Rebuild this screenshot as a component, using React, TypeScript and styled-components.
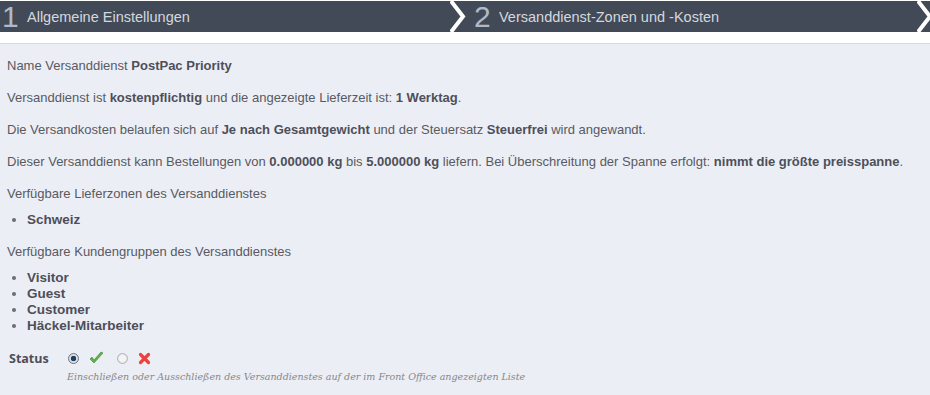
import React from 'react';
import styled, { createGlobalStyle } from 'styled-components';

const GlobalStyle = createGlobalStyle`
  html, body {
    margin: 0;
    padding: 0;
    background: #ffffff;
  }
  body {
    font-family: Arial, "Liberation Sans", sans-serif;
    font-size: 13px;
    color: #585a62;
  }
`;

const Page = styled.div`
  width: 930px;
  height: 395px;
  overflow: hidden;
  display: flex;
  flex-direction: column;
`;

const Steps = styled.div`
  display: flex;
  height: 31px;
  margin-top: 1px;
`;

const Step = styled.div`
  flex: ${p => (p.$last ? '0 0 451px' : '0 0 450px')};
  display: flex;
  align-items: center;
  background: #434a57;
`;

const StepNumber = styled.span`
  font-size: 30px;
  line-height: 30px;
  height: 30px;
  color: #aebacb;
  padding-left: ${p => (p.$first ? '2px' : '8px')};
  width: ${p => (p.$first ? '25px' : '24px')};
`;

const StepLabel = styled.span`
  font-size: 14.5px;
  color: #d3d8df;
  margin-left: ${p => (p.$first ? '0' : '1px')};
`;

const Separator = styled.svg`
  display: block;
  flex: 0 0 auto;
  background: #434a57;
`;

const Spacer = styled.div`
  height: 11px;
  background: #ffffff;
  border-bottom: 1px solid #d6d9e1;
`;

const Panel = styled.div`
  flex: 1;
  background: #eceef5;
  padding: 14px 7px 0;
`;

const Line = styled.p`
  margin: 0 0 16px;
  line-height: 16px;
  color: #585a62;
`;

const Strong = styled.b`
  color: #4d4f59;
`;

const Heading = styled.p`
  margin: 0 0 10px;
  line-height: 16px;
`;

const Bullets = styled.ul`
  margin: 0 0 16px;
  padding-left: 20px;
  list-style: disc;
`;

const Bullet = styled.li`
  font-size: 13.5px;
  font-weight: bold;
  line-height: 16px;
  color: #4d4f59;
  &::marker {
    color: #6a6c74;
    font-size: 13px;
  }
`;

const StatusRow = styled.div`
  display: flex;
  align-items: center;
  margin-top: 8px;
  height: 16px;
`;

const StatusLabel = styled.span`
  width: 59px;
  padding-left: 2px;
  font-family: "Open Sans", "DejaVu Sans", sans-serif;
  font-weight: bold;
  font-size: 12.5px;
  color: #4d4f59;
`;

const Radio = styled.span`
  width: 11px;
  height: 11px;
  border-radius: 50%;
  box-sizing: border-box;
  border: 1px solid ${p => (p.$checked ? '#6b7480' : '#b0b4ba')};
  background: ${p =>
    p.$checked
      ? 'radial-gradient(circle, #1f3f5c 0 2.5px, #d9dde2 3px)'
      : 'radial-gradient(circle, #f4f4f4 0 3px, #dcdcdc 5px)'};
  margin-right: 10px;
`;

const IconBox = styled.span`
  display: inline-flex;
  margin-right: 13px;
`;

const Help = styled.div`
  margin: 5px 0 0 60px;
  font-family: "DejaVu Serif", "Liberation Serif", serif;
  font-style: italic;
  font-size: 9.5px;
  color: #85878c;
`;

const Check = () => (
  <svg width="15" height="14" viewBox="0 0 15 14">
    <path d="M1 8 L5 12 L14 2 L12 1 L5 9 L3 6 Z" fill="#5fb04a" stroke="#3f8a30" strokeWidth="0.6" />
  </svg>
);

const Cross = () => (
  <svg width="13" height="13" viewBox="0 0 13 13">
    <path d="M2.5 2.5 L10.5 10.5 M10.5 2.5 L2.5 10.5" stroke="#e8433f" strokeWidth="3.2" strokeLinecap="round" />
  </svg>
);

const Chevron = () => (
  <Separator width="16" height="31" viewBox="0 0 16 31">
    <polyline points="1,0 13,15.5 1,31" fill="none" stroke="#ffffff" strokeWidth="4" />
  </Separator>
);

export default function App() {
  return (
    <>
      <GlobalStyle />
      <Page>
        <Steps>
          <Step>
            <StepNumber $first>1</StepNumber>
            <StepLabel $first>Allgemeine Einstellungen</StepLabel>
          </Step>
          <Chevron />
          <Step $last>
            <StepNumber>2</StepNumber>
            <StepLabel>Versanddienst-Zonen und -Kosten</StepLabel>
          </Step>
          <Chevron />
        </Steps>
        <Spacer />
        <Panel>
          <Line>
            Name Versanddienst <Strong>PostPac Priority</Strong>
          </Line>
          <Line>
            Versanddienst ist <Strong>kostenpflichtig</Strong> und die angezeigte Lieferzeit ist: <Strong>1 Werktag</Strong>.
          </Line>
          <Line>
            Die Versandkosten belaufen sich auf <Strong>Je nach Gesamtgewicht</Strong> und der Steuersatz <Strong>Steuerfrei</Strong> wird angewandt.
          </Line>
          <Line>
            Dieser Versanddienst kann Bestellungen von <Strong>0.000000 kg</Strong> bis <Strong>5.000000 kg</Strong> liefern. Bei Überschreitung der Spanne erfolgt: <Strong>nimmt die größte preisspanne</Strong>.
          </Line>
          <Heading>Verfügbare Lieferzonen des Versanddienstes</Heading>
          <Bullets>
            <Bullet>Schweiz</Bullet>
          </Bullets>
          <Heading>Verfügbare Kundengruppen des Versanddienstes</Heading>
          <Bullets>
            <Bullet>Visitor</Bullet>
            <Bullet>Guest</Bullet>
            <Bullet>Customer</Bullet>
            <Bullet>Häckel-Mitarbeiter</Bullet>
          </Bullets>
          <StatusRow>
            <StatusLabel>Status</StatusLabel>
            <Radio $checked />
            <IconBox><Check /></IconBox>
            <Radio />
            <IconBox><Cross /></IconBox>
          </StatusRow>
          <Help>Einschließen oder Ausschließen des Versanddienstes auf der im Front Office angezeigten Liste</Help>
        </Panel>
      </Page>
    </>
  );
}
